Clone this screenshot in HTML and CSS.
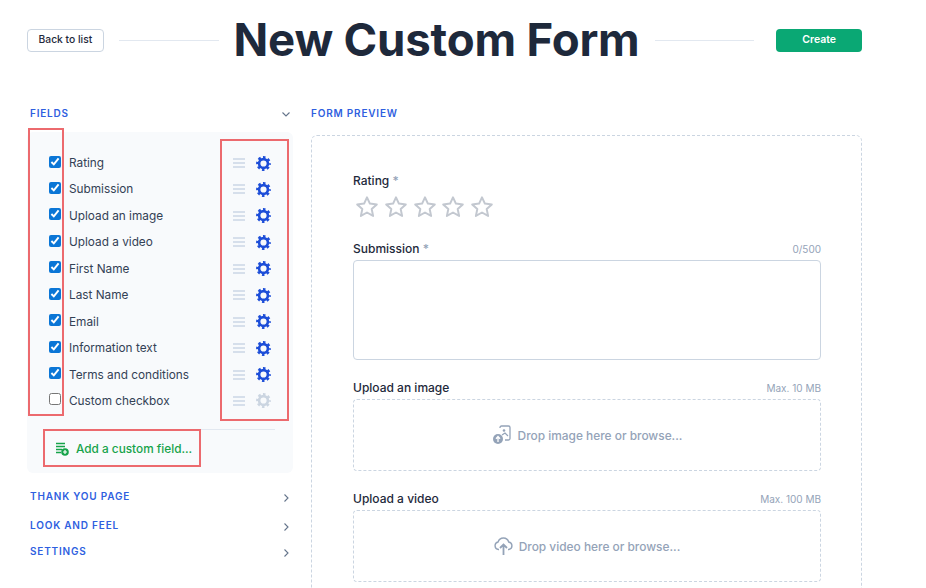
FILE: index.html
```html
<!DOCTYPE html>
<html lang="en">
<head>
<meta charset="utf-8">
<title>New Custom Form</title>
<link rel="stylesheet" href="styles.css">
</head>
<body>
<svg class="defs" width="0" height="0" aria-hidden="true">
  <symbol id="gear" viewBox="0 0 16 16">
    <circle cx="8" cy="8" r="4.700" fill="none" stroke="currentColor" stroke-width="2.800"/>
    <circle cx="8" cy="8" r="6.600" fill="none" stroke="currentColor" stroke-width="2.600" stroke-dasharray="2.700 2.484" stroke-dashoffset="1.350"/>
  </symbol>
  <symbol id="star" viewBox="0 0 24 24">
    <path fill="none" stroke="#c3c8d0" stroke-width="2" stroke-linejoin="round" d="M12 2.300l2.900 6.300 6.900.8-5.100 4.700 1.400 6.800-6.100-3.400-6.100 3.400 1.400-6.800-5.100-4.700 6.900-.8z"/>
  </symbol>
</svg>

<div class="page">
  <header class="top">
    <button class="btn btn-back">Back to list</button>
    <span class="rule"></span>
    <h1>New Custom Form</h1>
    <span class="rule"></span>
    <button class="btn btn-create">Create</button>
  </header>

  <div class="columns">
    <aside class="side">
      <div class="sec-head sec-first">
        <span class="sec-title">FIELDS</span>
        <svg class="chev" width="8" height="5" viewBox="0 0 8 5"><path d="M.5.500L4 4 7.500.5" fill="none" stroke="#64748b" stroke-width="1.100"/></svg>
      </div>
      <div class="panel">
        <ul class="fields">
          <li class="field"><input type="checkbox" checked><span class="f-label">Rating</span><span class="grip"></span><svg class="gear"><use href="#gear"/></svg></li>
          <li class="field"><input type="checkbox" checked><span class="f-label">Submission</span><span class="grip"></span><svg class="gear"><use href="#gear"/></svg></li>
          <li class="field"><input type="checkbox" checked><span class="f-label">Upload an image</span><span class="grip"></span><svg class="gear"><use href="#gear"/></svg></li>
          <li class="field"><input type="checkbox" checked><span class="f-label">Upload a video</span><span class="grip"></span><svg class="gear"><use href="#gear"/></svg></li>
          <li class="field"><input type="checkbox" checked><span class="f-label">First Name</span><span class="grip"></span><svg class="gear"><use href="#gear"/></svg></li>
          <li class="field"><input type="checkbox" checked><span class="f-label">Last Name</span><span class="grip"></span><svg class="gear"><use href="#gear"/></svg></li>
          <li class="field"><input type="checkbox" checked><span class="f-label">Email</span><span class="grip"></span><svg class="gear"><use href="#gear"/></svg></li>
          <li class="field"><input type="checkbox" checked><span class="f-label">Information text</span><span class="grip"></span><svg class="gear"><use href="#gear"/></svg></li>
          <li class="field"><input type="checkbox" checked><span class="f-label">Terms and conditions</span><span class="grip"></span><svg class="gear"><use href="#gear"/></svg></li>
          <li class="field"><input type="checkbox"><span class="f-label">Custom checkbox</span><span class="grip"></span><svg class="gear gear-off"><use href="#gear"/></svg></li>
        </ul>
        <div class="add-row">
          <svg width="13" height="14" viewBox="0 0 13 14"><path d="M0 1.500h9M0 4.500h9M0 7.500h6M0 10.500h5" stroke="#16a34a" stroke-width="1.300" fill="none"/><circle cx="9" cy="10" r="3.800" fill="#16a34a"/><path d="M9 8v4M7 10h4" stroke="#fff" stroke-width="1.200"/></svg>
          <span>Add a custom field...</span>
        </div>
      </div>
      <div class="sec-head sec-a"><span class="sec-title">THANK YOU PAGE</span><svg class="chev-r" width="5" height="8" viewBox="0 0 5 8"><path d="M.5.500L4 4 .5 7.500" fill="none" stroke="#64748b" stroke-width="1.100"/></svg></div>
      <div class="sec-head sec-b"><span class="sec-title">LOOK AND FEEL</span><svg class="chev-r" width="5" height="8" viewBox="0 0 5 8"><path d="M.5.500L4 4 .5 7.500" fill="none" stroke="#64748b" stroke-width="1.100"/></svg></div>
      <div class="sec-head sec-c"><span class="sec-title">SETTINGS</span><svg class="chev-r" width="5" height="8" viewBox="0 0 5 8"><path d="M.5.500L4 4 .5 7.500" fill="none" stroke="#64748b" stroke-width="1.100"/></svg></div>
    </aside>

    <main class="preview">
      <div class="sec-title prev-title">FORM PREVIEW</div>
      <div class="card">
        <div class="lab-row"><span class="lab">Rating <i>*</i></span></div>
        <div class="stars">
          <svg><use href="#star"/></svg><svg><use href="#star"/></svg><svg><use href="#star"/></svg><svg><use href="#star"/></svg><svg><use href="#star"/></svg>
        </div>
        <div class="lab-row lab-sub"><span class="lab">Submission <i>*</i></span><span class="hint">0/500</span></div>
        <div class="textarea"></div>
        <div class="lab-row lab-up"><span class="lab">Upload an image</span><span class="hint">Max. 10 MB</span></div>
        <div class="drop">
          <svg width="20" height="20" viewBox="0 0 20 20"><path d="M8 3V2.500A1.500 1.500 0 0 1 9.500 1h7A1.500 1.500 0 0 1 18 2.500v11a1.500 1.500 0 0 1-1.500 1.500H13" fill="none" stroke="#94a3b8" stroke-width="1.300"/><circle cx="12" cy="5.500" r="1.300" fill="#94a3b8"/><path d="M10 10l3-2 3 3" fill="none" stroke="#94a3b8" stroke-width="1.200"/><circle cx="6" cy="14" r="5" fill="#94a3b8"/><path d="M6 17v-5M4 13.800L6 11.500l2 2.300" fill="none" stroke="#fff" stroke-width="1.300"/></svg>
          <span>Drop image here or browse...</span>
        </div>
        <div class="lab-row lab-up"><span class="lab">Upload a video</span><span class="hint">Max. 100 MB</span></div>
        <div class="drop">
          <svg width="19" height="18" viewBox="0 0 19 18"><path d="M5 12.500H4.500a3.800 3.800 0 0 1-.4-7.500 5.500 5.500 0 0 1 10.600 0 3.800 3.800 0 0 1 .1 7.500H14" fill="none" stroke="#94a3b8" stroke-width="1.400"/><path d="M9.500 18V8M6 11l3.500-3.500L13 11" fill="none" stroke="#94a3b8" stroke-width="1.800"/></svg>
          <span>Drop video here or browse...</span>
        </div>
      </div>
    </main>
  </div>
</div>

<span class="mark mark-left"></span>
<span class="mark mark-right"></span>
<span class="mark mark-add"></span>
</body>
</html>
```
FILE: styles.css
```css
html, body { margin: 0; padding: 0; height: 588px; overflow: hidden; background: #fff; }
body { font-family: "Inter", "Noto Sans", sans-serif; color: #1e293b; position: relative; }
.defs { position: absolute; }
.page { width: 835px; margin-left: 27px; }

.top { display: flex; align-items: center; height: 80px; }
.btn { height: 23px; border-radius: 4px; font: 500 10.300px "Inter", sans-serif; padding: 0 0 2px; }
.btn-back { width: 77px; background: #fff; border: 1px solid #cbd5e1; color: #1e293b; }
.btn-create { width: 86px; background: #0aa874; border: 0; color: #fff; font-weight: 600; font-size: 10.500px; margin-left: 22px; }
.rule { width: 100px; height: 1px; background: #e2e8f0; margin-left: 15px; }
h1 { margin: 0 0 0 15px; font-size: 45.600px; line-height: 80px; font-weight: 700; color: #1e293b; letter-spacing: -0.2px; white-space: nowrap; }
h1 + .rule { margin-left: 15px; }

.columns { display: flex; gap: 18px; align-items: flex-start; }
.side { width: 266px; flex: none; }
.preview { width: 551px; flex: none; }

.sec-title { font-size: 10px; font-weight: 600; letter-spacing: 0.8px; color: #2f5fe0; line-height: 12px; }
.sec-head { display: flex; justify-content: space-between; align-items: center; padding: 0 4px 0 3px; height: 14px; }
.sec-first { margin-top: 26px; padding-right: 3px; }
.chev { margin-top: 2px; }
.chev-r { margin-top: 3px; }
.sec-a { margin-top: 16px; }
.sec-b { margin-top: 15px; }
.sec-c { margin-top: 12px; }

.panel { margin-top: 12px; height: 341px; box-sizing: border-box; background: #f8fafc; border-radius: 6px; padding-top: 17.800px; }
.fields { list-style: none; margin: 0; padding: 0 22px; }
.field { display: flex; align-items: center; height: 26.440px; font-size: 11.800px; color: #334155; }
.field input { width: 12px; height: 12px; margin: 0 8px 3px 0; accent-color: #0b76d6; flex: none; }
.f-label { flex: 1; }
.grip { width: 12px; height: 10px; margin-right: 11px; background: repeating-linear-gradient(to bottom, #d6dfeb 0 2px, transparent 2px 4px); }
.gear { width: 15px; height: 15px; color: #1d4ed8; }
.gear-off { color: #cbd5e1; }

.add-row { display: flex; align-items: center; gap: 7px; margin: 14.500px 18px 0 29px; padding-top: 9px; font-size: 11.800px; font-weight: 500; color: #16a34a; border-top: 1px solid #e2e8f0; height: 20px; }

.prev-title { margin-top: 27px; }
.card { margin-top: 16px; height: 600px; box-sizing: border-box; border: 1px dashed #cbd5e1; border-radius: 6px; padding: 37px 40px 0 41px; }
.lab-row { display: flex; justify-content: space-between; align-items: center; height: 16px; line-height: 16px; }
.lab { font-size: 12px; font-weight: 500; color: #1e293b; }
.lab i { font-style: normal; color: #94a3b8; }
.hint { font-size: 10px; color: #94a3b8; }
.stars { display: flex; gap: 4.800px; margin: 6px 0 0 2px; height: 24px; }
.stars svg { width: 24px; height: 24px; }
.lab-sub { margin-top: 22px; }
.textarea { margin: 3px 0 1px; height: 98px; border: 1px solid #cbd5e1; border-radius: 4px; }
.lab-up { margin-top: 20px; }
.drop { margin-top: 3px; height: 70px; border: 1px dashed #cbd5e1; border-radius: 4px; display: flex; align-items: center; justify-content: center; gap: 6px; font-size: 11.900px; font-weight: 500; color: #94a3b8; }

.mark { position: absolute; border: 2px solid #ec6a6e; box-sizing: border-box; pointer-events: none; }
.mark-left { left: 28px; top: 128px; width: 36px; height: 288px; }
.mark-right { left: 220px; top: 139px; width: 69px; height: 282px; }
.mark-add { left: 43px; top: 429px; width: 158px; height: 38px; }
```
